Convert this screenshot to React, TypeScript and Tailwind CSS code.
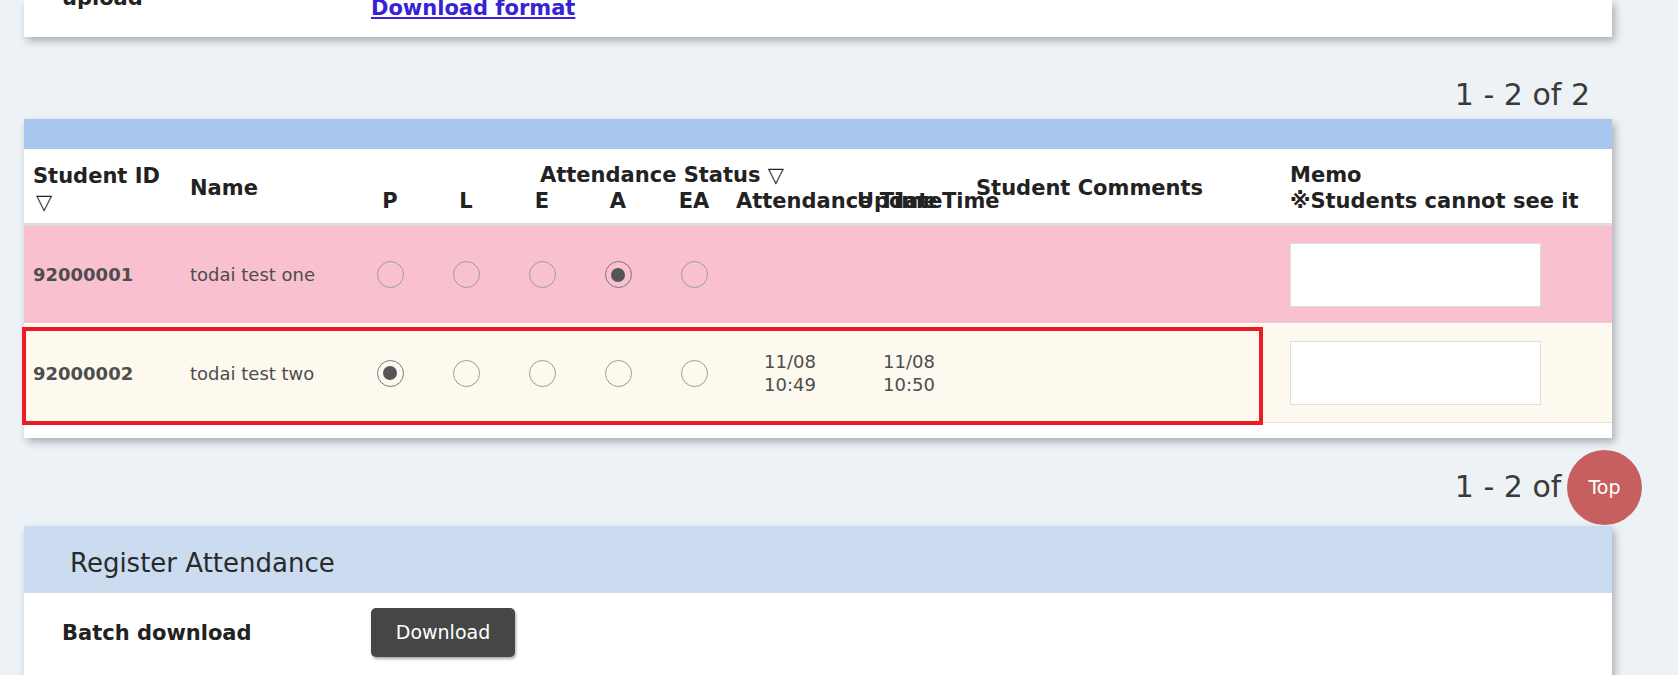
import React from "react";

const COLS =
  "grid grid-cols-[157px_171px_76px_76px_76px_76px_76px_121px_119px_314px_1fr]";

function Radio({ checked }: { checked?: boolean }) {
  return (
    <div className="flex items-center justify-center">
      <div
        className={
          "flex h-[27px] w-[27px] items-center justify-center rounded-full border " +
          (checked ? "border-[#777]" : "border-[#9a9a9a]")
        }
      >
        {checked && <div className="h-[14px] w-[14px] rounded-full bg-[#555]" />}
      </div>
    </div>
  );
}

type Row = {
  id: string;
  name: string;
  sel: number;
  att?: [string, string];
  upd?: [string, string];
  bg: string;
  highlight?: boolean;
};

const rows: Row[] = [
  { id: "92000001", name: "todai test one", sel: 3, bg: "bg-[#f9c1cf]" },
  {
    id: "92000002",
    name: "todai test two",
    sel: 0,
    att: ["11/08", "10:49"],
    upd: ["11/08", "10:50"],
    bg: "bg-[#fdf9ee]",
    highlight: true,
  },
];

function Pagination({ className }: { className: string }) {
  return (
    <div className={"flex justify-end pr-[22px] text-[30px] leading-[38px] text-[#3a3a3a] " + className}>
      1 - 2 of 2
    </div>
  );
}

export default function App() {
  return (
    <div
      className="relative min-h-[675px] w-[1678px] overflow-hidden bg-[#edf2f6]"
      style={{ fontFamily: '"DejaVu Sans", Verdana, sans-serif' }}
    >
      <div className="ml-[24px] w-[1588px]">
        {/* Top card (cut off) */}
        <div className="flex h-[37px] items-end overflow-hidden bg-white pb-[16px] shadow-[3px_4px_8px_rgba(0,0,0,0.28)]">
          <div className="mb-[10px] w-[347px] pl-[38px] text-[21px] font-bold leading-[26px] text-[#222]">
            CSV file
            <br />
            upload
          </div>
          <a className="text-[21px] font-bold leading-[26px] text-[#3624d4] underline">
            Download format
          </a>
        </div>

        <Pagination className="mt-[39px] mb-[5px]" />

        {/* Table card */}
        <div className="bg-white pb-[15px] shadow-[3px_4px_8px_rgba(0,0,0,0.28)]">
          <div className="h-[30px] bg-[#a8c7ef]" />
          {/* Header */}
          <div className={COLS + " h-[77px] items-center border-b-[3px] border-[#dddddd] pt-[4px] text-[21px] font-bold leading-[26px] text-[#222]"}>
            <div className="pl-[9px] pt-[1px]">
              Student ID
              <br />
              <span className="pl-[3px]">▽</span>
            </div>
            <div className="pl-[9px]">Name</div>
            <div className="col-span-7 flex flex-col">
              <div className="text-center">Attendance Status ▽</div>
              <div className="grid grid-cols-[76px_76px_76px_76px_76px_121px_119px] whitespace-nowrap">
                <div className="text-center">P</div>
                <div className="text-center">L</div>
                <div className="text-center">E</div>
                <div className="text-center">A</div>
                <div className="text-center">EA</div>
                <div className="pl-[4px]">Attendance Time</div>
                <div className="pl-[4px] [word-spacing:-8px]">Update Time</div>
              </div>
            </div>
            <div className="whitespace-nowrap pl-[4px]">Student Comments</div>
            <div className="whitespace-nowrap pl-[4px]">
              Memo
              <br />
              ※Students cannot see it
            </div>
          </div>
          {/* Rows */}
          {rows.map((r, i) => (
            <div
              key={r.id}
              className={
                COLS +
                " relative items-center text-[18px] leading-[23px] text-[#4d4d4d] " +
                r.bg +
                (i === 0 ? " h-[98px] border-b border-white" : " h-[99px] border-b border-[#e6e2d6]")
              }
            >
              <div className="pl-[9px] font-bold">{r.id}</div>
              <div className="pl-[9px]">{r.name}</div>
              {[0, 1, 2, 3, 4].map((k) => (
                <Radio key={k} checked={r.sel === k} />
              ))}
              <div className="pl-[32px]">
                {r.att && (
                  <>
                    {r.att[0]}
                    <br />
                    {r.att[1]}
                  </>
                )}
              </div>
              <div className="pl-[30px]">
                {r.upd && (
                  <>
                    {r.upd[0]}
                    <br />
                    {r.upd[1]}
                  </>
                )}
              </div>
              <div />
              <div className="pl-[4px]">
                <div className="h-[64px] w-[251px] border border-[#dddddd] bg-white" />
              </div>
              {r.highlight && (
                <div className="pointer-events-none absolute left-[-2px] top-[3px] h-[98px] w-[1241px] border-[4px] border-[#ed1c24]" />
              )}
            </div>
          ))}
        </div>

        <Pagination className="mt-[30px] mb-[20px]" />

        {/* Register Attendance card */}
        <div className="bg-white pb-[40px] shadow-[3px_4px_8px_rgba(0,0,0,0.28)]">
          <div className="flex h-[67px] items-center bg-[#cbdcf1] pl-[46px] pt-[6px] text-[26px] leading-[34px] text-[#2a2a2a]">
            Register Attendance
          </div>
          <div className="flex items-center pt-[15px]">
            <div className="w-[347px] pl-[38px] text-[21px] font-bold leading-[26px] text-[#222]">
              Batch download
            </div>
            <button className="flex h-[49px] w-[144px] items-center justify-center rounded-[5px] bg-[#464646] text-[19px] text-white shadow-[1px_2px_3px_rgba(0,0,0,0.35)]">
              Download
            </button>
          </div>
        </div>
      </div>

      {/* Floating Top button */}
      <div className="absolute left-[1567px] top-[450px] flex h-[75px] w-[75px] items-center justify-center rounded-full bg-[#c75f5f] text-[19px] text-white">
        Top
      </div>
    </div>
  );
}
